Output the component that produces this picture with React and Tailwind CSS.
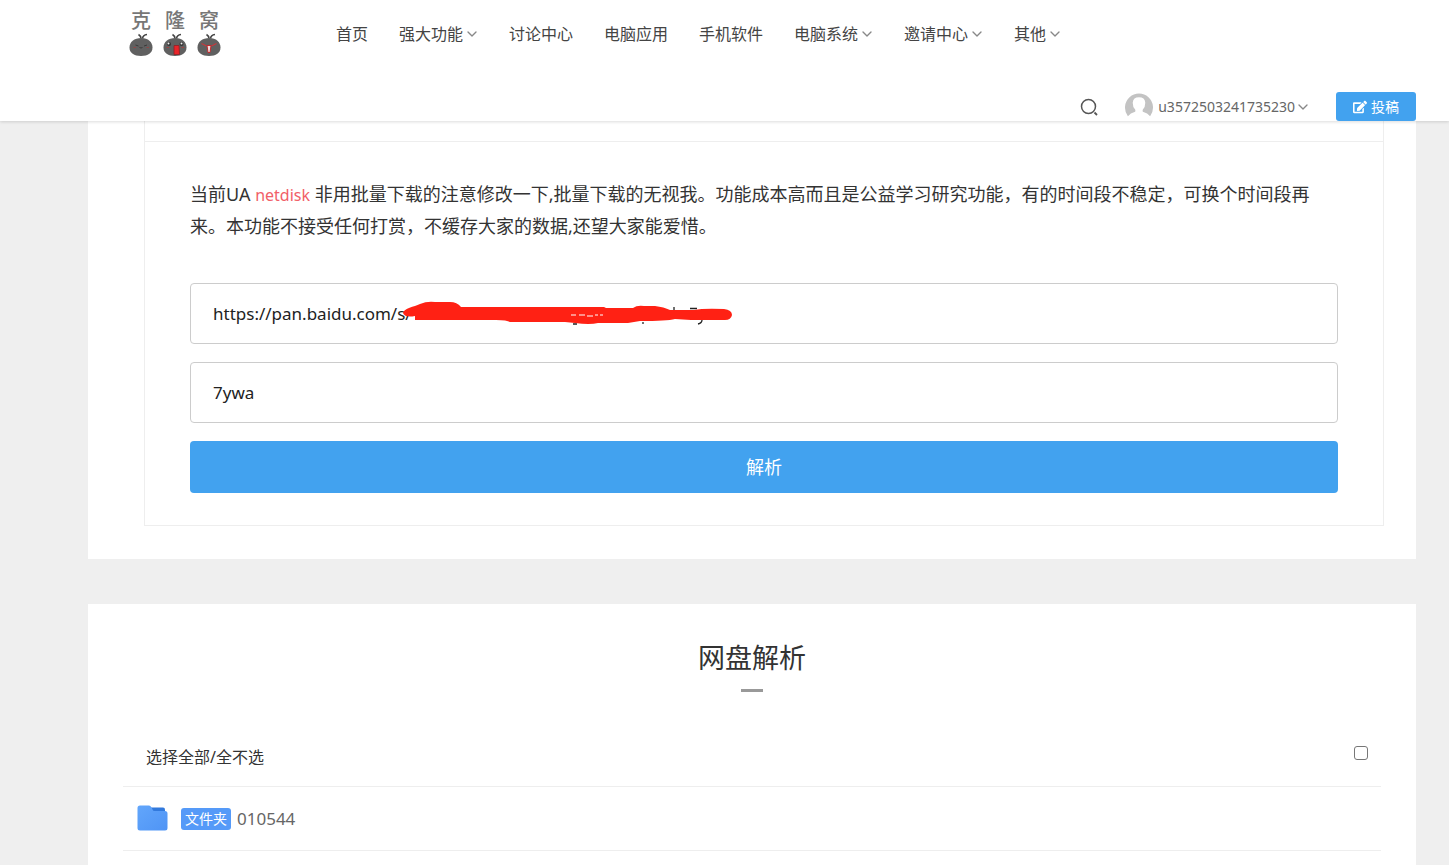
import { useState } from 'react';
import { FaEdit } from 'react-icons/fa';
import { FiChevronDown } from 'react-icons/fi';

const navItems = [
  { label: '首页' },
  { label: '强大功能', menu: true },
  { label: '讨论中心' },
  { label: '电脑应用' },
  { label: '手机软件' },
  { label: '电脑系统', menu: true },
  { label: '邀请中心', menu: true },
  { label: '其他', menu: true },
];

const folders = [{ id: 1, name: '010544' }];

const Chevron = () => <FiChevronDown size={16} strokeWidth={2} className="-mr-0.5 text-[#888]" />;

const Mascot = ({ face }) => (
  <svg viewBox="0 0 24 24" className="h-6 w-6" aria-hidden="true">
    <path d="M12 5.500Q12 3 9.500 1.500M13.500 5.500Q14 2 18 1.500" fill="none" stroke="#444" strokeWidth="1.600" />
    <path d="M12.500 5C19 5 23.500 9 23.500 14.500C23.500 20 19 23 12 23C5 23 0.500 20 0.500 14.500C0.500 9 5 5 12.500 5Z" fill="#606060" />
    {face === 'calm' && (
      <g fill="none" strokeWidth="1">
        <path d="M6.500 12l3 1M15 13l3-1M10.500 14.500q1.500 1 3 0" stroke="#3a3a3a" />
        <path d="M4.500 14.500h2.500M17.500 14.500h2.500" stroke="#8f4646" />
      </g>
    )}
    {face === 'shout' && (
      <g>
        <circle cx="6" cy="11" r="2" fill="#333" />
        <circle cx="18.500" cy="11" r="2" fill="#333" />
        <circle cx="5.500" cy="10.500" r="1" fill="#eee" />
        <circle cx="18.500" cy="10.500" r="1" fill="#eee" />
        <path d="M3.500 14.500h2.500M18.500 14.500h2.500" stroke="#a04040" />
        <path d="M11 12.500h5l0.500 9h-5.500z" fill="#e92429" stroke="#8e2024" strokeWidth="0.800" />
      </g>
    )}
    {face === 'angry' && (
      <g>
        <path d="M4.500 10.500l5 2.500M19.500 10.500l-5 2.500" stroke="#c8383c" strokeWidth="1.200" />
        <path d="M10 12.500h4l-1 7h-2z" fill="#f2dcdc" stroke="#c02a2e" strokeWidth="1" />
      </g>
    )}
  </svg>
);

const Logo = () => (
  <a href="#" className="grid grid-cols-3 gap-x-2.5 justify-items-center text-[20px] leading-5 font-medium text-[#777]">
    <span>克</span>
    <span>隆</span>
    <span>窝</span>
    <span className="mt-0.5"><Mascot face="calm" /></span>
    <span className="mt-0.5"><Mascot face="shout" /></span>
    <span className="mt-0.5"><Mascot face="angry" /></span>
  </a>
);

const Header = () => (
  <header className="relative z-10 bg-white shadow-[0_1px_3px_rgba(0,0,0,0.14)]">
    <div className="flex items-center pl-[129px] pr-8 h-[68px]">
      <Logo />
      <nav className="ml-[115px] flex gap-[31px] text-base text-[#444]">
        {navItems.map((item) => (
          <a key={item.label} href="#" className="flex items-center whitespace-nowrap">
            {item.label}
            {item.menu && (
              <span className="pl-px">
                <Chevron />
              </span>
            )}
          </a>
        ))}
      </nav>
    </div>

    <div className="flex items-end justify-end pt-6 pr-[33px]">
      <button type="button" aria-label="搜索" className="mb-1 mr-[25px]">
        <svg viewBox="0 0 20 20" className="h-5 w-5" fill="none" stroke="#555">
          <circle cx="9.500" cy="9.500" r="7" strokeWidth="1.500" />
          <path d="M15.500 15.500l2.500 2.500" strokeWidth="1.800" />
        </svg>
      </button>
      <button type="button" className="mr-[27px] flex items-center text-sm text-[#666]">
        <svg viewBox="0 0 30 30" className="mr-1 h-[29px] w-[30px]" aria-hidden="true">
          <path d="M3.500 25A14.500 14.500 0 1 1 26.500 25Q24 22 19 20.500Q18.500 19 19 18Q21.500 15.500 21.500 11Q21 5.500 15 5.500Q9 5.500 8.500 11Q8.500 15.500 11 18Q11.500 19 11 20.500Q6 22 3.500 25Z" fill="#c3c3c3" />
        </svg>
        <span>u3572503241735230</span>
        <Chevron />
      </button>
      <button type="button" className="flex h-[29px] w-20 items-center justify-center gap-1 rounded-[3px] bg-[#42a2ef] text-sm text-white">
        <FaEdit size={14} />
        投稿
      </button>
    </div>
  </header>
);

// hand-drawn marker stroke that hides the share code
const Scribble = () => (
  <svg viewBox="0 0 350 50" className="pointer-events-none absolute left-[210px] top-[7px] h-[50px] w-[350px]" aria-hidden="true">
    <path d="M274 17v3M290 18.500h7M302 30q0 3-4 4M243 32v2M173 34h4" fill="none" stroke="#222" strokeWidth="1.300" />
    <path
      d="M3 23C4 18 14 17 20 14Q27 11 35 12H50Q57 12 61 17H204L206 18H233Q237 15 244 16H255Q264 17 270 20H294Q304 18 324 19Q332 20 332 25Q331 30 325 30H291L275 29Q267 31 240 31L228 33H198Q190 35 175 33L165 32H110Q107 30 96 30H15V26Q5 28 3 23Z"
      fill="#ff2114"
    />
    <path d="M171 25h5M179 25h6M187 26h6M195 25h3M200 25h3" stroke="#fff" strokeWidth="1" />
  </svg>
);

const ParseForm = () => {
  const [link, setLink] = useState('https://pan.baidu.com/s/');
  const [code, setCode] = useState('7ywa');

  return (
    <section className="bg-white pb-[33px] pl-14 pr-8">
      <div className="border border-t-0 border-[#eee]">
        <div className="h-[21px] border-b border-[#eee]" />
        <form className="px-[45px] pb-8 pt-9" onSubmit={(e) => e.preventDefault()}>
          <p className="text-lg leading-8 text-[#333]">
            当前UA <span className="text-base text-[#f16068]">netdisk</span>{' '}
            非用批量下载的注意修改一下,批量下载的无视我。功能成本高而且是公益学习研究功能，有的时间段不稳定，可换个时间段再来。本功能不接受任何打赏，不缓存大家的数据,还望大家能爱惜。
          </p>
          <div className="relative mt-[41px]">
            <input
              type="text"
              aria-label="链接"
              value={link}
              onChange={(e) => setLink(e.target.value)}
              className="block h-[61px] w-full rounded border border-[#ccc] px-[22px] text-[17px] text-[#222]"
            />
            <Scribble />
          </div>
          <input
            type="text"
            aria-label="提取码"
            value={code}
            onChange={(e) => setCode(e.target.value)}
            className="mt-[18px] block h-[61px] w-full rounded border border-[#ccc] px-[22px] text-[17px] text-[#222]"
          />
          <button type="submit" className="mt-[18px] block h-[52px] w-full rounded bg-[#42a2ef] text-lg text-white">
            解析
          </button>
        </form>
      </div>
    </section>
  );
};

const FolderIcon = () => (
  <svg viewBox="0 0 31 26" className="mb-0.5 h-[26px] w-[31px]" aria-hidden="true">
    <defs>
      <linearGradient id="folder" x1="0" y1="0" x2="1" y2="1">
        <stop offset="0" stopColor="#62a6fb" />
        <stop offset="1" stopColor="#4f94f5" />
      </linearGradient>
    </defs>
    <path d="M14 2.500h12q2 0 2 2v4H14z" fill="#3279dc" />
    <path d="M3 0.500h9q1.500 0 2.500 2l1 2q0.500 1.500 2 1.500h10.500q2.500 0 2.500 2.500V23q0 2.500-2.500 2.500H3Q0.500 25.500 0.500 23V3Q0.500 0.500 3 0.500Z" fill="url(#folder)" />
  </svg>
);

const FileList = () => {
  const [all, setAll] = useState(false);

  return (
    <section className="mt-[45px] bg-white px-[35px] pt-8 pb-8">
      <h2 className="text-center text-[27px] leading-[44px] text-[#333]">网盘解析</h2>
      <div className="mx-auto mt-[9px] h-[3px] w-[22px] bg-[#999]" />
      <div className="mt-[30px] flex h-[65px] items-center justify-between border-b border-[#eee] pl-[23px] pr-[13px]">
        <label htmlFor="select-all" className="pt-1.5 text-base text-[#333]">选择全部/全不选</label>
        <input
          id="select-all"
          type="checkbox"
          checked={all}
          onChange={(e) => setAll(e.target.checked)}
          className="mb-0.5 h-3.5 w-3.5 appearance-none rounded-[3px] border border-[#777] bg-white checked:bg-[#42a2ef]"
        />
      </div>
      <ul>
        {folders.map((folder) => (
          <li key={folder.id} className="flex h-16 items-center border-b border-[#eee] pl-3.5">
            <FolderIcon />
            <span className="ml-[13px] h-[22px] rounded-[3px] bg-[#559af8] px-1 text-sm leading-[22px] text-white">文件夹</span>
            <a href="#" className="ml-1.5 text-[17px] text-[#666]">{folder.name}</a>
          </li>
        ))}
      </ul>
    </section>
  );
};

export default function App() {
  return (
    <div className="min-h-screen bg-[#efefef] font-['Noto_Sans','Noto_Sans_CJK_SC',sans-serif]">
      <Header />
      <main className="pl-[88px] pr-[33px]">
        <ParseForm />
        <FileList />
      </main>
    </div>
  );
}
